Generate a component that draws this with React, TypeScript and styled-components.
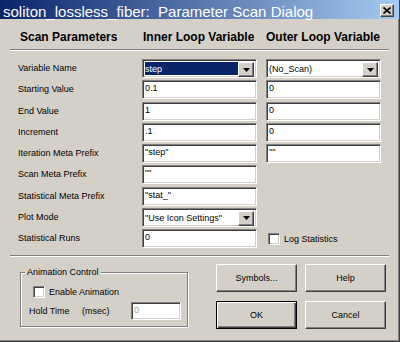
import React from 'react';
import styled, { createGlobalStyle, css } from 'styled-components';

const Global = createGlobalStyle`
  html, body { margin: 0; padding: 0; background: #d4d0c8; }
  body { font-family: "Liberation Sans", Arial, sans-serif; }
  * { box-sizing: border-box; }
`;

const raised = css`
  background: #d4d0c8;
  border-top: 1px solid #ffffff;
  border-left: 1px solid #ffffff;
  border-right: 1px solid #404040;
  border-bottom: 1px solid #404040;
  box-shadow: inset -1px -1px 0 #808080;
`;

const sunken = css`
  border-top: 1px solid #808080;
  border-left: 1px solid #808080;
  border-right: 1px solid #ffffff;
  border-bottom: 1px solid #ffffff;
  box-shadow: inset 1px 1px 0 #404040, inset -1px -1px 0 #d4d0c8;
`;

const Window = styled.div`
  width: 400px;
  height: 342px;
  background: #d4d0c8;
  border-right: 1px solid #404040;
  border-bottom: 1px solid #404040;
  box-shadow: inset -1px -1px 0 #808080;
  display: flex;
  flex-direction: column;
  overflow: hidden;
  font-family: "Liberation Sans", Arial, sans-serif;
  color: #000;
`;

const TitleBar = styled.div`
  height: 19px;
  flex: none;
  display: flex;
  align-items: flex-start;
  padding-left: 3px;
  background: linear-gradient(to right, #0a246a, #a6caf0);
`;

const TitleText = styled.span`
  font-size: 15px;
  line-height: 17px;
  padding-top: 3px;
  color: #ffffff;
  white-space: pre;
`;

const CloseButton = styled.div`
  ${raised};
  margin-left: auto;
  margin-top: 4px;
  margin-right: 5px;
  width: 14px;
  height: 13px;
  display: flex;
  align-items: center;
  justify-content: center;
`;

const HeaderRow = styled.div`
  height: 30px;
  padding: 11px 0 0 18px;
  display: grid;
  grid-template-columns: 115px 115px 115px;
  column-gap: 9px;
`;

const HeaderCell = styled.div<{ $indent: number }>`
  font-size: 12px;
  font-weight: bold;
  line-height: 14px;
  padding-left: ${(p) => p.$indent}px;
  white-space: nowrap;
`;

const Separator = styled.div<{ $top: number }>`
  height: 2px;
  margin: ${(p) => p.$top}px 10px 0 10px;
  border-top: 1px solid #808080;
  border-bottom: 1px solid #ffffff;
`;

const ParamGrid = styled.div`
  margin-top: 8px;
  padding-left: 18px;
  display: grid;
  grid-template-columns: 115px 115px 115px;
  grid-auto-rows: 19px;
  column-gap: 9px;
  row-gap: 2.25px;
`;

const Label = styled.div`
  font-size: 9px;
  line-height: 19px;
  white-space: nowrap;
`;

const TextBox = styled.div<{ $disabled?: boolean }>`
  ${sunken};
  background: #ffffff;
  height: 100%;
  padding-left: 2px;
  font-size: 9px;
  line-height: 15px;
  white-space: nowrap;
  overflow: hidden;
  color: ${(p) => (p.$disabled ? '#a0a0a0' : '#000')};
`;

const Combo = styled.div`
  ${sunken};
  background: #ffffff;
  height: 100%;
  display: flex;
  padding: 2px;
`;

const ComboValue = styled.div<{ $selected?: boolean }>`
  flex: 1;
  padding-left: 0px;
  font-size: 9px;
  line-height: 15px;
  white-space: nowrap;
  overflow: hidden;
  background: ${(p) => (p.$selected ? '#0a246a' : '#ffffff')};
  color: ${(p) => (p.$selected ? '#ffffff' : '#000')};
`;

const ComboButton = styled.div`
  ${raised};
  width: 16px;
  height: 15px;
  display: flex;
  align-items: center;
  justify-content: center;
`;

const CheckRow = styled.label<{ $indent: number }>`
  display: flex;
  align-items: center;
  gap: 4px;
  padding-left: ${(p) => p.$indent}px;
  font-size: 9px;
  white-space: nowrap;
`;

const CheckBox = styled.span`
  ${sunken};
  background: #ffffff;
  width: 12px;
  height: 12px;
  flex: none;
`;

const BottomRow = styled.div`
  display: flex;
  align-items: flex-start;
  padding: 7px 0 0 20px;
`;

const GroupBox = styled.div`
  position: relative;
  margin-top: 8px;
  width: 168px;
  height: 55px;
  border: 1px solid #808080;
  box-shadow: inset 1px 1px 0 #ffffff, 1px 1px 0 #ffffff;
  padding: 13px 0 0 8px;
  display: flex;
  flex-direction: column;
`;

const GroupCaption = styled.span`
  position: absolute;
  top: -6px;
  left: 4px;
  padding: 0 2px;
  background: #d4d0c8;
  font-size: 9px;
  line-height: 11px;
  white-space: nowrap;
`;

const HoldRow = styled.div`
  margin-top: 4px;
  display: grid;
  grid-template-columns: 53px 49px 50px;
  grid-template-rows: 18px;
  align-items: center;
  font-size: 9px;
  white-space: nowrap;
`;

const ButtonGrid = styled.div`
  margin-left: 28px;
  display: grid;
  grid-template-columns: 81px 81px;
  grid-auto-rows: 28px;
  column-gap: 8px;
  row-gap: 9px;
`;

const PushButton = styled.button<{ $default?: boolean }>`
  ${raised};
  font-family: "Liberation Sans", Arial, sans-serif;
  font-size: 9px;
  color: #000;
  padding: 0;
  margin: 0;
  ${(p) =>
    p.$default &&
    css`
      border: 1px solid #000000;
      box-shadow: inset 1px 1px 0 #ffffff, inset -1px -1px 0 #404040, inset -2px -2px 0 #808080;
    `}
`;

const Arrow = () => (
  <svg width="7" height="4" viewBox="0 0 7 4">
    <polygon points="0,0 7,0 3.5,4" fill="#000" />
  </svg>
);

const CloseGlyph = () => (
  <svg width="8" height="7" viewBox="0 0 8 7">
    <path d="M0.5 0.5 L7.5 6.5 M7.5 0.5 L0.5 6.5" stroke="#000" strokeWidth="1.6" />
  </svg>
);

type Field =
  | { kind: 'text'; value: string }
  | { kind: 'combo'; value: string; selected?: boolean }
  | { kind: 'check'; value: string }
  | null;

const rows: { label: string; inner: Field; outer: Field }[] = [
  { label: 'Variable Name', inner: { kind: 'combo', value: 'step', selected: true }, outer: { kind: 'combo', value: '(No_Scan)' } },
  { label: 'Starting Value', inner: { kind: 'text', value: '0.1' }, outer: { kind: 'text', value: '0' } },
  { label: 'End Value', inner: { kind: 'text', value: '1' }, outer: { kind: 'text', value: '0' } },
  { label: 'Increment', inner: { kind: 'text', value: '.1' }, outer: { kind: 'text', value: '0' } },
  { label: 'Iteration Meta Prefix', inner: { kind: 'text', value: '"step"' }, outer: { kind: 'text', value: '""' } },
  { label: 'Scan Meta Prefix', inner: { kind: 'text', value: '""' }, outer: null },
  { label: 'Statistical Meta Prefix', inner: { kind: 'text', value: '"stat_"' }, outer: null },
  { label: 'Plot Mode', inner: { kind: 'combo', value: '"Use Icon Settings"' }, outer: null },
  { label: 'Statistical Runs', inner: { kind: 'text', value: '0' }, outer: { kind: 'check', value: 'Log Statistics' } },
];

const renderField = (f: Field, key: string) => {
  if (!f) return <span key={key} />;
  if (f.kind === 'text') return <TextBox key={key}>{f.value}</TextBox>;
  if (f.kind === 'check')
    return (
      <CheckRow key={key} $indent={2}>
        <CheckBox />
        {f.value}
      </CheckRow>
    );
  return (
    <Combo key={key}>
      <ComboValue $selected={f.selected}>{f.value}</ComboValue>
      <ComboButton>
        <Arrow />
      </ComboButton>
    </Combo>
  );
};

export default function App() {
  return (
    <>
      <Global />
      <Window>
        <TitleBar>
          <TitleText>{'soliton_lossless_fiber:  Parameter Scan Dialog'}</TitleText>
          <CloseButton>
            <CloseGlyph />
          </CloseButton>
        </TitleBar>
        <HeaderRow>
          <HeaderCell $indent={2}>Scan Parameters</HeaderCell>
          <HeaderCell $indent={1}>Inner Loop Variable</HeaderCell>
          <HeaderCell $indent={0}>Outer Loop Variable</HeaderCell>
        </HeaderRow>
        <Separator $top={0} />
        <ParamGrid>
          {rows.map((r) => (
            <React.Fragment key={r.label}>
              <Label>{r.label}</Label>
              {renderField(r.inner, r.label + '-in')}
              {renderField(r.outer, r.label + '-out')}
            </React.Fragment>
          ))}
        </ParamGrid>
        <Separator $top={7} />
        <BottomRow>
          <GroupBox>
            <GroupCaption>Animation Control</GroupCaption>
            <CheckRow $indent={4}>
              <CheckBox />
              Enable Animation
            </CheckRow>
            <HoldRow>
              <span>Hold Time</span>
              <span>(msec)</span>
              <TextBox $disabled>0</TextBox>
            </HoldRow>
          </GroupBox>
          <ButtonGrid>
            <PushButton>Symbols...</PushButton>
            <PushButton>Help</PushButton>
            <PushButton $default>OK</PushButton>
            <PushButton>Cancel</PushButton>
          </ButtonGrid>
        </BottomRow>
      </Window>
    </>
  );
}
